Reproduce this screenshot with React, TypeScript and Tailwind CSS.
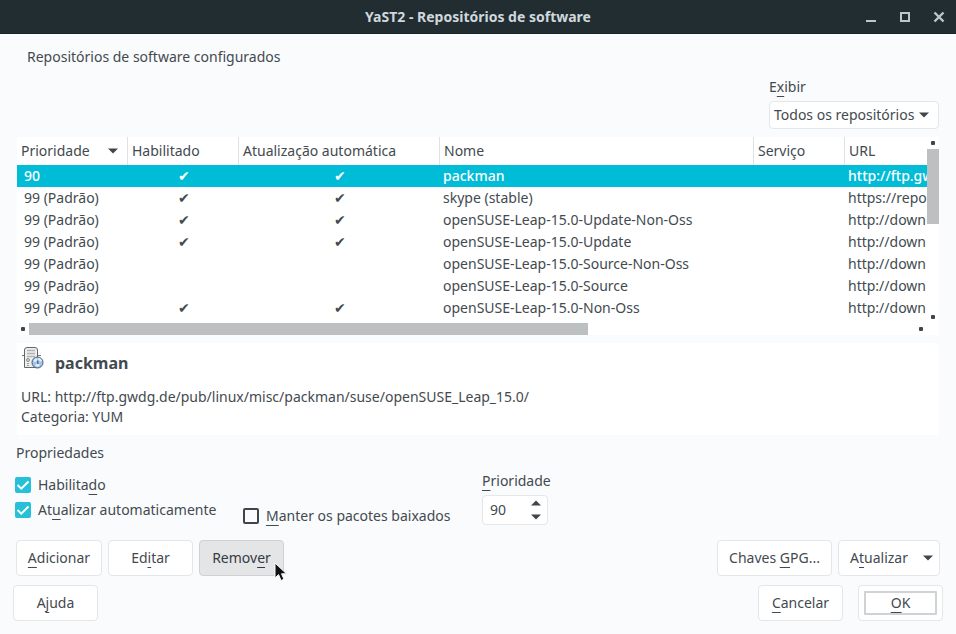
import type { ReactNode } from "react";

type Repo = { priority: string; active: boolean; name: string; url: string };

const repos: Repo[] = [
  { priority: "90", active: true, name: "packman", url: "http://ftp.gw" },
  { priority: "99 (Padrão)", active: true, name: "skype (stable)", url: "https://repo" },
  { priority: "99 (Padrão)", active: true, name: "openSUSE-Leap-15.0-Update-Non-Oss", url: "http://down" },
  { priority: "99 (Padrão)", active: true, name: "openSUSE-Leap-15.0-Update", url: "http://down" },
  { priority: "99 (Padrão)", active: false, name: "openSUSE-Leap-15.0-Source-Non-Oss", url: "http://down" },
  { priority: "99 (Padrão)", active: false, name: "openSUSE-Leap-15.0-Source", url: "http://down" },
  { priority: "99 (Padrão)", active: true, name: "openSUSE-Leap-15.0-Non-Oss", url: "http://down" },
];

function Key({ children }: { children: ReactNode }) {
  return <span className="underline decoration-1 underline-offset-4 [text-decoration-skip-ink:none]">{children}</span>;
}

function Arrow({ up = false }: { up?: boolean }) {
  return (
    <svg width="10" height="6" viewBox="0 0 10 6" className="shrink-0 fill-[#3f464b]" aria-hidden="true">
      <path d={up ? "M0 5.5 5 .5l5 5z" : "M0 .5h10l-5 5z"} />
    </svg>
  );
}

function Button({ children, className = "" }: { children: ReactNode; className?: string }) {
  return (
    <button
      type="button"
      className={`flex h-9 items-center justify-center rounded-sm border ${className || "w-[85px] border-[#e4e6e7] bg-white"}`}
    >
      {children}
    </button>
  );
}

function Check({ id, checked = false, children }: { id: string; checked?: boolean; children: ReactNode }) {
  return (
    <div className="flex h-5 items-center">
      <span className="relative grid size-4">
        <input
          id={id}
          type="checkbox"
          defaultChecked={checked}
          className="peer size-4 appearance-none rounded-[2px] border-2 border-[#3f464b] checked:border-[#26c0d8] checked:bg-[#26c0d8]"
        />
        <svg
          viewBox="0 0 16 16"
          className="pointer-events-none absolute inset-0 hidden fill-none stroke-white stroke-2 peer-checked:block"
          aria-hidden="true"
        >
          <path d="M2.5 8 6.3 11.7 13.5 4.5" />
        </svg>
      </span>
      <label htmlFor={id} className="pl-[7px]">
        {children}
      </label>
    </div>
  );
}

function ServerIcon() {
  return (
    <svg width="22" height="24" viewBox="0 0 22 24" className="shrink-0" aria-hidden="true">
      <path d="M0 9.5h3M16 9.5h3" stroke="#7d8183" />
      <path d="M2.500 21.500V4Q2.500 1.500 5 1.500H13Q15.500 1.500 15.500 4V21.500Z" fill="#eeeeec" stroke="#63676a" />
      <path d="M5 4.500h8M5 7.500h8M5 10.500h8" stroke="#b0b3b2" strokeWidth="1.500" />
      <circle cx="6" cy="14" r="1.500" fill="#d3d7cf" stroke="#8b8f90" />
      <path d="M5 17.500h2M5 19.500h2" stroke="#989a95" />
      <circle cx="15.500" cy="16.500" r="5.500" fill="#a9c3e2" stroke="#405b84" />
      <path d="M11.500 15.500q.5-3 3-3.500l.500 2-1.500 2zM16 12q3 0 4 3l-1.500.500-2-1zM13 19l2-1 3 .500-1.500 2h-2z" fill="#e8f1fa" />
      <path d="M15 14.500h1.500V18H15z" fill="#4b76ae" />
    </svg>
  );
}

export default function App() {
  const th = "border-r border-[#dfe1e2] pl-1 text-left font-normal";
  return (
    <div className="min-h-screen cursor-default bg-[#fafbfd] font-['Noto_Sans','Open_Sans',sans-serif] text-sm leading-5 text-[#434a4f]">
      <header className="grid h-[34px] grid-cols-[1fr_auto_1fr] items-center border-b border-[#1a2226] bg-[#222d32] text-[#cfd8dc]">
        <span />
        <h1 className="text-sm font-bold">YaST2 - Repositórios de software</h1>
        <div className="flex items-center justify-end pr-[11px] text-[#bcc6cb]">
          <button type="button" aria-label="Minimizar" className="grid h-5 w-[34px] place-items-end">
            <svg width="12" height="20" viewBox="0 0 12 20" fill="none" stroke="currentColor" strokeWidth="2">
              <path d="M1 14h10" />
            </svg>
          </button>
          <button type="button" aria-label="Maximizar" className="grid h-5 w-[34px] place-items-end">
            <svg width="12" height="20" viewBox="0 0 12 20" fill="none" stroke="currentColor" strokeWidth="2">
              <path d="M2 6h8v8H2z" />
            </svg>
          </button>
          <button type="button" aria-label="Fechar" className="grid h-5 w-[34px] place-items-end">
            <svg width="12" height="20" viewBox="0 0 12 20" fill="none" stroke="currentColor" strokeWidth="2.400">
              <path d="M1.500 5.500l9 9M10.500 5.500l-9 9" />
            </svg>
          </button>
        </div>
      </header>

      <main className="px-[17px] pt-[13px]">
        <h2 className="pl-[10px]">Repositórios de software configurados</h2>

        <div className="mt-[10px] flex justify-end">
          <div className="w-[170px]">
            <label htmlFor="view" className="block">
              E<Key>x</Key>ibir
            </label>
            <div className="relative mt-1">
              <select
                id="view"
                className="block h-7 w-full appearance-none rounded-sm border border-[#e4e6e7] bg-white pl-1"
              >
                <option>Todos os repositórios</option>
              </select>
              <span className="pointer-events-none absolute inset-y-0 right-[10px] flex items-center">
                <Arrow />
              </span>
            </div>
          </div>
        </div>

        <section className="mt-2 bg-white">
          <div className="flex">
            <div className="min-w-0 flex-1 overflow-hidden">
              <table className="w-full table-fixed border-separate border-spacing-0 whitespace-nowrap">
                <colgroup>
                  <col className="w-[111px]" />
                  <col className="w-[111px]" />
                  <col className="w-[201px]" />
                  <col className="w-[314px]" />
                  <col className="w-[91px]" />
                  <col />
                </colgroup>
                <thead>
                  <tr className="h-7">
                    <th className={th}>
                      <span className="flex items-center justify-between pr-[9px]">
                        Prioridade <Arrow />
                      </span>
                    </th>
                    <th className={th}>Habilitado</th>
                    <th className={th}>Atualização automática</th>
                    <th className={th}>Nome</th>
                    <th className={th}>Serviço</th>
                    <th className="pl-1 text-left font-normal">URL</th>
                  </tr>
                </thead>
                <tbody>
                  {repos.map((r, i) => (
                    <tr key={r.name} className={i === 0 ? "h-[22px] bg-[#00bcd7] font-medium text-white" : "h-[22px]"}>
                      <td className="pl-[7px]">{r.priority}</td>
                      <td className="text-center">{r.active && "✔"}</td>
                      <td className="text-center">{r.active && "✔"}</td>
                      <td className="pl-[3px]">{r.name}</td>
                      <td />
                      <td className="overflow-hidden pl-[3px]">{r.url}</td>
                    </tr>
                  ))}
                </tbody>
              </table>
            </div>
            <div className="flex w-3 flex-col items-center pt-1" aria-hidden="true">
              <span className="size-1 rounded-[1px] bg-[#3f464b]" />
              <span className="mt-1 h-[75px] w-3 bg-[#bdc0c1]" />
              <span className="mt-auto size-1 rounded-[1px] bg-[#3f464b]" />
            </div>
          </div>
          <div className="mt-1 flex h-3 items-center pr-4 pl-1" aria-hidden="true">
            <span className="size-1 rounded-[1px] bg-[#3f464b]" />
            <span className="ml-1 h-3 w-[62%] bg-[#bdc0c1]" />
            <span className="ml-auto size-1 rounded-[1px] bg-[#3f464b]" />
          </div>
        </section>

        <section className="mt-2 bg-white pt-[3px] pb-2 pl-1">
          <div className="flex h-[41px] items-start">
            <span className="pl-px">
              <ServerIcon />
            </span>
            <h3 className="pt-[7px] pl-[11px] text-base leading-5 font-bold">packman</h3>
          </div>
          <p>URL: http://ftp.gwdg.de/pub/linux/misc/packman/suse/openSUSE_Leap_15.0/</p>
          <p>Categoria: YUM</p>
        </section>
      </main>

      <form className="px-4 pt-2">
        <h2>Propriedades</h2>
        <div className="-ml-px grid grid-cols-[228px_239px_1fr] pt-2">
          <div className="flex flex-col gap-[5px] pt-1">
            <Check id="enabled" checked>
              Habilita<Key>d</Key>o
            </Check>
            <Check id="refresh" checked>
              At<Key>u</Key>alizar automaticamente
            </Check>
          </div>
          <div className="pt-[35px]">
            <Check id="keep">
              <Key>M</Key>anter os pacotes baixados
            </Check>
          </div>
          <div className="w-[66px]">
            <label htmlFor="priority" className="block">
              <Key>P</Key>rioridade
            </label>
            <div className="mt-1 flex h-[30px] rounded-sm border border-[#e4e6e7] bg-white">
              <input id="priority" type="text" inputMode="numeric" defaultValue="90" className="w-0 flex-1 pl-[7px]" />
              <span className="flex w-[22px] flex-col">
                <button type="button" aria-label="Aumentar" className="flex flex-1 items-center justify-center">
                  <Arrow up />
                </button>
                <button type="button" aria-label="Diminuir" className="flex flex-1 items-center justify-center">
                  <Arrow />
                </button>
              </span>
            </div>
          </div>
        </div>

        <div className="flex gap-[6px] pt-[14px]">
          <Button className="w-[86px] border-[#e4e6e7] bg-white">
            <span><Key>A</Key>dicionar</span>
          </Button>
          <Button>
            <span>Ed<Key>i</Key>tar</span>
          </Button>
          <div className="relative">
            <Button className="w-[85px] border-[#cfd1d3] bg-[#e4e5e7] text-[#343b40]">
              <span>Remov<Key>e</Key>r</span>
            </Button>
            <svg width="14" height="20" viewBox="0 0 14 20" className="absolute top-[22px] left-[75px]" aria-hidden="true">
              <path d="M1 1v15l3.600-3.400L7 18.500l3-1.200-2.500-5.500h5z" fill="#111" stroke="#fff" />
            </svg>
          </div>
          <span className="flex-1" />
          <Button className="w-[115px] border-[#e4e6e7] bg-white">
            <span>Chaves <Key>G</Key>PG...</span>
          </Button>
          <Button className="w-[102px] gap-[15px] border-[#e4e6e7] bg-white pl-[5px]">
            <span>A<Key>t</Key>ualizar</span>
            <Arrow />
          </Button>
        </div>
      </form>

      <footer className="flex gap-[15px] px-[13px] pt-[9px] pb-3">
        <Button>
          <span>A<Key>j</Key>uda</span>
        </Button>
        <span className="flex-1" />
        <Button>
          <span><Key>C</Key>ancelar</span>
        </Button>
        <Button className="w-[85px] border-[#e4e6e7] bg-white px-[5px]">
          <span className="h-6 flex-1 rounded-[1px] border-2 border-[#d0d3d3]">
            <Key>O</Key>K
          </span>
        </Button>
      </footer>
    </div>
  );
}
